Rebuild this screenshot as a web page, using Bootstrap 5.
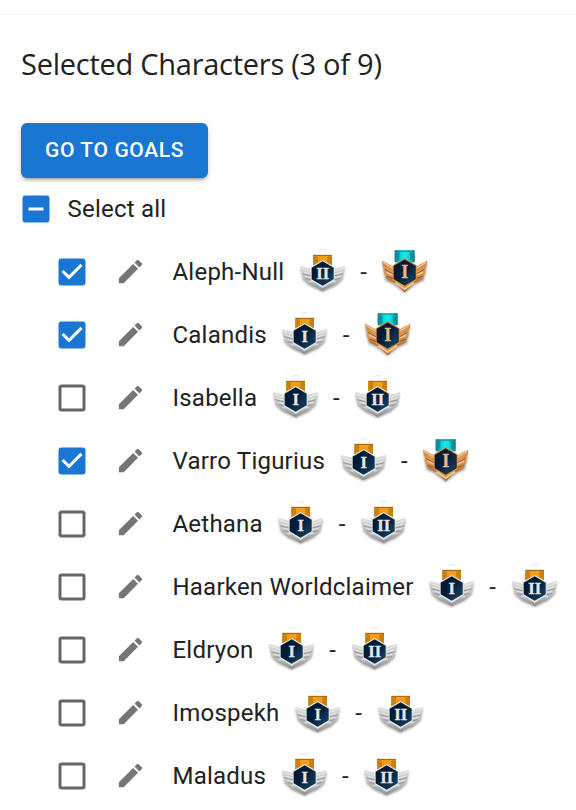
<!DOCTYPE html>
<html lang="en">
<head>
<meta charset="utf-8">
<meta name="viewport" content="width=device-width, initial-scale=1">
<title>Selected Characters</title>
<link href="https://cdn.jsdelivr.net/npm/bootstrap@5.3.0/dist/css/bootstrap.min.css" rel="stylesheet">
<style>
body{font-family:Roboto,"Liberation Sans",sans-serif;font-size:24px;line-height:36px;letter-spacing:.225px;color:#212121;background:#fff;overflow:hidden}
.top-rule{height:15px;border-bottom:1px solid #f3f3f3}
.page-main{padding:28px 0 0 21px}
.page-title{font:400 29px/42px "Open Sans","Noto Sans",sans-serif;letter-spacing:-.26px;margin:0 0 38px;white-space:nowrap}
.btn-goals{--bs-btn-bg:#1976d2;--bs-btn-color:#fff;--bs-btn-border-width:0;width:187px;height:55px;padding:0;border-radius:6px;font-size:21px;font-weight:500;letter-spacing:.62px;line-height:55px;box-shadow:0 4px 2px -3px rgba(0,0,0,.2),0 3px 3px rgba(0,0,0,.14),0 1px 7px rgba(0,0,0,.12)}
.all-row{height:62px;margin-left:-3px}
.all-row .tick-box{margin-right:13.5px}
.char-row{height:63px;padding-left:33px}
.tick-box{width:36px;height:36px;flex:none;fill:#666}
.tick-box.on{fill:#1976d2}
.pencil{width:31px;height:31px;margin:.5px 26.4px 0 25.1px;flex:none;fill:#757575}
.char-row>span{white-space:nowrap}
.medal{width:45px;height:45px;flex:none;margin-left:15.5px;overflow:visible}
.numeral{font:700 50px "Liberation Serif",serif;letter-spacing:0;text-anchor:middle;fill:#e4e6eb;stroke:#e4e6eb;stroke-width:1px}
.numeral.gold{font-size:54px;fill:#e6b885;stroke:#e6b885}
.dash{width:37.5px;text-align:center}
.dash+.medal{margin-left:0}
</style>
<script src="https://cdn.jsdelivr.net/npm/bootstrap@5.3.0/dist/js/bootstrap.bundle.min.js"></script>
</head>
<body>
<svg width="0" height="0" class="position-absolute" aria-hidden="true">
<defs>
<linearGradient id="silver" x2="0" y2="1"><stop stop-color="#dcdcdc"/><stop offset=".5" stop-color="#c2c2c2"/><stop offset="1" stop-color="#8d8d8d"/></linearGradient>
<linearGradient id="bronze" x2="0" y2="1"><stop stop-color="#c98645"/><stop offset=".35" stop-color="#d89a58"/><stop offset=".65" stop-color="#b8783c"/><stop offset="1" stop-color="#a56a34"/></linearGradient>
<linearGradient id="navy" x2="1" y2="1"><stop stop-color="#06152a"/><stop offset=".5" stop-color="#06203b"/><stop offset="1" stop-color="#0c4a70"/></linearGradient>
<linearGradient id="orange" x2="1"><stop stop-color="#b8760f"/><stop offset=".25" stop-color="#f29c18"/><stop offset=".75" stop-color="#f79d14"/><stop offset="1" stop-color="#b8760f"/></linearGradient>
<linearGradient id="teal" x2="1"><stop stop-color="#087f89"/><stop offset=".3" stop-color="#14d0d8"/><stop offset=".5" stop-color="#1eeaec"/><stop offset=".7" stop-color="#10d3da"/><stop offset="1" stop-color="#087f89"/></linearGradient>
<filter id="soft" x="-20%" y="-20%" width="140%" height="140%"><feGaussianBlur stdDeviation="1.2"/></filter>
<filter id="shade" x="-20%" y="-20%" width="140%" height="150%"><feGaussianBlur stdDeviation="2.5"/></filter>
</defs>
<symbol id="silver-medal" viewBox="0 0 135 135" overflow="visible">
<path d="M2 56L34 68L68 100L102 68L134 56L128 92L107 111L68 129L29 111L8 92Z" fill="#444" opacity=".5" filter="url(#shade)"/>
<g filter="url(#soft)">
<path d="M58 4Q68-1 78 4" fill="none" stroke="#e2e2e2" stroke-width="3"/>
<path d="M40 18H96V52H40Z" fill="url(#orange)"/>
<path d="M40 19H96" stroke="#9a6412" stroke-width="3"/>
<path d="M40 24L54 22V44L40 48ZM96 24L82 22V44L96 48Z" fill="#c98010"/>
<path d="M54 42H82L78 38H58Z" fill="#a0640d"/>
<path d="M1 51Q18 55 34 60L40 84L68 104L96 84L102 60Q118 55 134 51Q135 64 131 74Q131 84 123 90Q121 99 110 102Q104 111 90 114L68 127L46 114Q32 111 26 102Q15 99 13 90Q5 84 5 74Q0 64 1 51Z" fill="url(#silver)"/>
<path d="M7 74Q21 79 36 80M16 89Q28 92 42 91M129 74Q115 79 100 80M120 89Q108 92 94 91" fill="none" stroke="#808080" stroke-width="3" opacity=".75"/>
<path d="M4 57L34 68M10 69L36 77M16 82L40 88M28 98L48 99M132 57L102 68M126 69L100 77M120 82L96 88M108 98L88 99" stroke="#f3f3f3" stroke-width="3" opacity=".75"/>
<path d="M68 33L104 53V94L68 117L32 94V53Z" fill="#e4e4e4"/>
<path d="M68 37L101 56V91L68 110L35 91V56Z" fill="url(#navy)"/>
</g>
</symbol>
<symbol id="bronze-medal" viewBox="0 0 135 135" overflow="visible">
<path d="M0 42L33 55L68 100L103 55L136 42L126 95L103 106L68 133L32 106L10 95Z" fill="#444" opacity=".45" filter="url(#shade)"/>
<g filter="url(#soft)">
<path d="M38 4H98V40H38Z" fill="url(#teal)"/>
<path d="M38 6H98" stroke="#07808a" stroke-width="3"/>
<path d="M38 14L52 8V34H38ZM98 14L84 8V34H98Z" fill="#078692" opacity=".65"/>
<path d="M0 35Q17 41 34 54L40 84L68 102L96 84L102 54Q119 41 136 35Q135 50 130 60Q133 72 126 80Q126 91 112 97L97 103L68 130L39 103L24 97Q10 91 10 80Q3 72 6 60Q1 50 0 35Z" fill="url(#bronze)"/>
<path d="M9 61L34 75M14 82L39 90M127 61L102 75M122 82L97 90" stroke="#844c22" stroke-width="3" opacity=".8"/>
<path d="M4 40L33 58M13 70L36 80M132 40L103 58M123 70L100 80" stroke="#f4c184" stroke-width="5"/>
<path d="M68 27L104 49V93L68 116L32 93V49Z" fill="#d6934f"/>
<path d="M68 32L100 51V90L68 109L36 90V51Z" fill="url(#navy)" stroke="#281a1b" stroke-width="2"/>
<path d="M40 101L68 120L96 101" fill="none" stroke="#f3c987" stroke-width="6"/>
</g>
</symbol>
<symbol id="checked" viewBox="0 0 24 24"><path d="M19 3H5a2 2 0 0 0-2 2v14a2 2 0 0 0 2 2h14a2 2 0 0 0 2-2V5a2 2 0 0 0-2-2zm-9 14-5-5 1.41-1.41L10 14.17l7.59-7.59L19 8l-9 9z"/></symbol>
<symbol id="unchecked" viewBox="0 0 24 24"><path d="M19 5v14H5V5h14m0-2H5a2 2 0 0 0-2 2v14a2 2 0 0 0 2 2h14a2 2 0 0 0 2-2V5a2 2 0 0 0-2-2z"/></symbol>
<symbol id="partial" viewBox="0 0 24 24"><path d="M19 3H5a2 2 0 0 0-2 2v14a2 2 0 0 0 2 2h14a2 2 0 0 0 2-2V5a2 2 0 0 0-2-2zm-2 10H7v-2h10v2z"/></symbol>
<symbol id="edit" viewBox="0 0 24 24"><path d="M3 17.25V21h3.75L17.81 9.94l-3.75-3.75L3 17.25zM20.71 7.04a1 1 0 0 0 0-1.41l-2.34-2.34a1 1 0 0 0-1.41 0l-1.83 1.83 3.75 3.75 1.83-1.83z"/></symbol>
</svg>
<div class="top-rule"></div>
<main class="page-main">
<h1 class="page-title">Selected Characters (3 of 9)</h1>
<button class="btn btn-goals d-block" type="button">GO TO GOALS</button>
<div class="all-row d-flex align-items-center"><svg class="tick-box on"><use href="#partial"/></svg><span>Select all</span></div>
<div class="d-flex flex-column">
<div class="char-row d-flex align-items-center"><svg class="tick-box on"><use href="#checked"/></svg><svg class="pencil"><use href="#edit"/></svg><span>Aleph-Null</span><svg class="medal" viewBox="0 0 135 135"><use href="#silver-medal"/><text class="numeral" x="68" y="91">II</text></svg><span class="dash">-</span><svg class="medal" viewBox="0 0 135 135"><use href="#bronze-medal"/><text class="numeral gold" x="68" y="88">I</text></svg></div>
<div class="char-row d-flex align-items-center"><svg class="tick-box on"><use href="#checked"/></svg><svg class="pencil"><use href="#edit"/></svg><span>Calandis</span><svg class="medal" viewBox="0 0 135 135"><use href="#silver-medal"/><text class="numeral" x="68" y="91">I</text></svg><span class="dash">-</span><svg class="medal" viewBox="0 0 135 135"><use href="#bronze-medal"/><text class="numeral gold" x="68" y="88">I</text></svg></div>
<div class="char-row d-flex align-items-center"><svg class="tick-box"><use href="#unchecked"/></svg><svg class="pencil"><use href="#edit"/></svg><span>Isabella</span><svg class="medal" viewBox="0 0 135 135"><use href="#silver-medal"/><text class="numeral" x="68" y="91">I</text></svg><span class="dash">-</span><svg class="medal" viewBox="0 0 135 135"><use href="#silver-medal"/><text class="numeral" x="68" y="91">II</text></svg></div>
<div class="char-row d-flex align-items-center"><svg class="tick-box on"><use href="#checked"/></svg><svg class="pencil"><use href="#edit"/></svg><span>Varro Tigurius</span><svg class="medal" viewBox="0 0 135 135"><use href="#silver-medal"/><text class="numeral" x="68" y="91">I</text></svg><span class="dash">-</span><svg class="medal" viewBox="0 0 135 135"><use href="#bronze-medal"/><text class="numeral gold" x="68" y="88">I</text></svg></div>
<div class="char-row d-flex align-items-center"><svg class="tick-box"><use href="#unchecked"/></svg><svg class="pencil"><use href="#edit"/></svg><span>Aethana</span><svg class="medal" viewBox="0 0 135 135"><use href="#silver-medal"/><text class="numeral" x="68" y="91">I</text></svg><span class="dash">-</span><svg class="medal" viewBox="0 0 135 135"><use href="#silver-medal"/><text class="numeral" x="68" y="91">II</text></svg></div>
<div class="char-row d-flex align-items-center"><svg class="tick-box"><use href="#unchecked"/></svg><svg class="pencil"><use href="#edit"/></svg><span>Haarken Worldclaimer</span><svg class="medal" viewBox="0 0 135 135"><use href="#silver-medal"/><text class="numeral" x="68" y="91">I</text></svg><span class="dash">-</span><svg class="medal" viewBox="0 0 135 135"><use href="#silver-medal"/><text class="numeral" x="68" y="91">II</text></svg></div>
<div class="char-row d-flex align-items-center"><svg class="tick-box"><use href="#unchecked"/></svg><svg class="pencil"><use href="#edit"/></svg><span>Eldryon</span><svg class="medal" viewBox="0 0 135 135"><use href="#silver-medal"/><text class="numeral" x="68" y="91">I</text></svg><span class="dash">-</span><svg class="medal" viewBox="0 0 135 135"><use href="#silver-medal"/><text class="numeral" x="68" y="91">II</text></svg></div>
<div class="char-row d-flex align-items-center"><svg class="tick-box"><use href="#unchecked"/></svg><svg class="pencil"><use href="#edit"/></svg><span>Imospekh</span><svg class="medal" viewBox="0 0 135 135"><use href="#silver-medal"/><text class="numeral" x="68" y="91">I</text></svg><span class="dash">-</span><svg class="medal" viewBox="0 0 135 135"><use href="#silver-medal"/><text class="numeral" x="68" y="91">II</text></svg></div>
<div class="char-row d-flex align-items-center"><svg class="tick-box"><use href="#unchecked"/></svg><svg class="pencil"><use href="#edit"/></svg><span>Maladus</span><svg class="medal" viewBox="0 0 135 135"><use href="#silver-medal"/><text class="numeral" x="68" y="91">I</text></svg><span class="dash">-</span><svg class="medal" viewBox="0 0 135 135"><use href="#silver-medal"/><text class="numeral" x="68" y="91">II</text></svg></div>
</div>
</main>
</body>
</html>
